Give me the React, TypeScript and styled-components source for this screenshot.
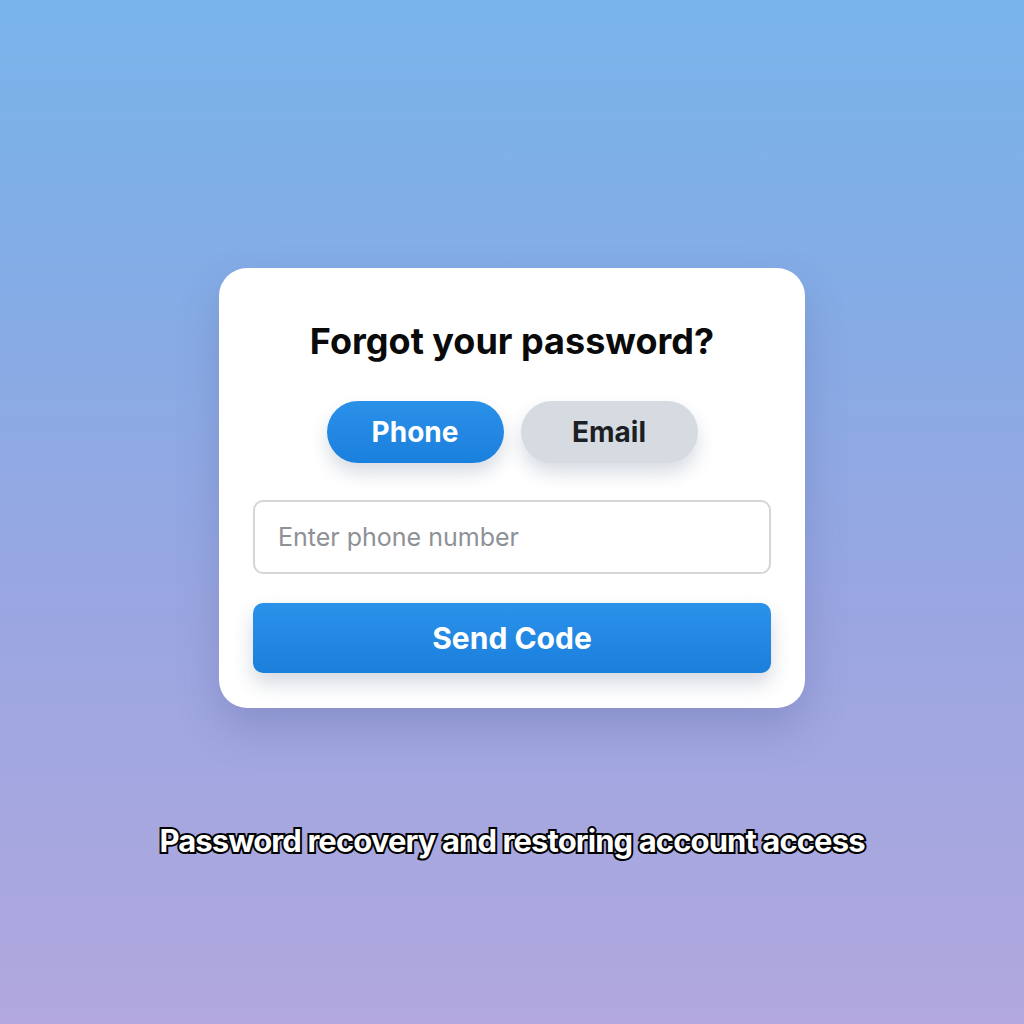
import { useState } from "react";
import styled, { createGlobalStyle } from "styled-components";

const GlobalStyle = createGlobalStyle`
  html, body {
    margin: 0;
    padding: 0;
  }
  body {
    font-family: Inter, "Noto Sans", sans-serif;
  }
`;

const App: React.FC = () => {
  const [mode, setMode] = useState<"phone" | "email">("phone");
  const [value, setValue] = useState("");

  return (
    <Page>
      <GlobalStyle />
      <Card>
        <Title>Forgot your password?</Title>
        <Toggle>
          <ToggleButton $active={mode === "phone"} onClick={() => setMode("phone")}>
            Phone
          </ToggleButton>
          <ToggleButton $active={mode === "email"} onClick={() => setMode("email")}>
            Email
          </ToggleButton>
        </Toggle>
        <Input
          type="text"
          placeholder={mode === "phone" ? "Enter phone number" : "Enter email address"}
          value={value}
          onChange={(e) => setValue(e.target.value)}
        />
        <SendButton>Send Code</SendButton>
      </Card>
      <Caption>Password recovery and restoring account access</Caption>
    </Page>
  );
};

const Page = styled.div`
  width: 100vw;
  height: 1024px;
  box-sizing: border-box;
  padding-top: 268px;
  display: flex;
  flex-direction: column;
  align-items: center;
  background: linear-gradient(180deg, #78b4ea 0%, #86ace6 30%, #9aa6e1 60%, #b2a8df 100%);
  overflow: hidden;
`;

const Card = styled.div`
  width: 586px;
  height: 440px;
  box-sizing: border-box;
  padding: 52px 34px 0;
  background: #ffffff;
  border-radius: 28px;
  box-shadow: 0 20px 40px rgba(70, 80, 140, 0.25);
  display: flex;
  flex-direction: column;
  align-items: center;
`;

const Title = styled.h1`
  margin: 0;
  font-size: 36px;
  line-height: 42px;
  font-weight: 700;
  color: #0a0a0a;
  letter-spacing: 0;
`;

const Toggle = styled.div`
  display: flex;
  gap: 17px;
  margin-top: 39px;
`;

const ToggleButton = styled.button<{ $active: boolean }>`
  width: 177px;
  height: 62px;
  border: none;
  border-radius: 31px;
  font-family: Inter, "Noto Sans", sans-serif;
  font-size: 28px;
  font-weight: 700;
  cursor: pointer;
  color: ${(p) => (p.$active ? "#ffffff" : "#1c1f24")};
  background: ${(p) =>
    p.$active ? "linear-gradient(180deg, #2a90e8 0%, #1a80dd 100%)" : "#d6dbe1"};
  box-shadow: 0 10px 18px rgba(40, 60, 100, 0.18);
`;

const Input = styled.input`
  margin-top: 37px;
  width: 100%;
  height: 74px;
  box-sizing: border-box;
  border: 2px solid #d3d5d8;
  border-radius: 10px;
  padding: 0 23px;
  font-family: Inter, "Noto Sans", sans-serif;
  font-size: 25px;
  color: #222;
  outline: none;

  &::placeholder {
    color: #8e9195;
  }
`;

const SendButton = styled.button`
  margin-top: 29px;
  width: 100%;
  height: 70px;
  border: none;
  border-radius: 10px;
  background: linear-gradient(180deg, #2b92ea 0%, #1b7fdc 100%);
  color: #ffffff;
  font-family: Inter, "Noto Sans", sans-serif;
  font-size: 30px;
  font-weight: 700;
  cursor: pointer;
  box-shadow: 0 10px 20px rgba(40, 60, 100, 0.2);
`;

const Caption = styled.p`
  margin: 114px 0 0;
  font-size: 31px;
  font-weight: 700;
  letter-spacing: -0.9px;
  color: #ffffff;
  -webkit-text-stroke: 4px #000;
  paint-order: stroke fill;
`;

export default App;
